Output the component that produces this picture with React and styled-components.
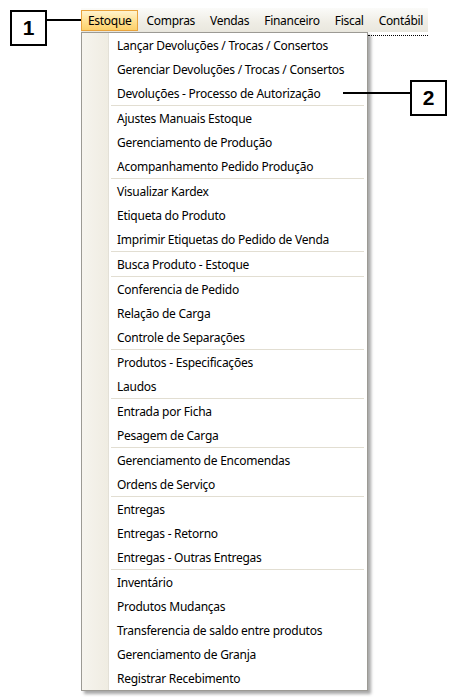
import React from "react";
import styled, { createGlobalStyle } from "styled-components";

const Global = createGlobalStyle`
  html, body { margin: 0; padding: 0; background: #ffffff; }
  body { font-family: "Noto Sans", "Open Sans", sans-serif; }
`;

const Page = styled.div`
  position: relative;
  width: 466px;
  height: 697px;
  padding: 8px 0 0 10px;
  box-sizing: border-box;
  overflow: hidden;
  display: flex;
  align-items: flex-start;
`;

const Annotation = styled.div`
  display: flex;
  align-items: flex-start;
  margin-top: 2px;
`;

const MenuColumn = styled.div`
  display: flex;
  flex-direction: column;
`;

const MenuBar = styled.div`
  display: flex;
  gap: 1px;
  width: 347px;
  height: 24px;
  padding-top: 2px;
  box-sizing: border-box;
  background: linear-gradient(#fbfbf9, #efede5 60%, #e9e7de);
`;

const BarItem = styled.div`
  height: 21px;
  padding: 0 6px;
  display: flex;
  align-items: center;
  font-size: 12px;
  letter-spacing: -0.3px;
  color: #000;
  box-sizing: border-box;
  border: 1px solid ${(p) => (p.active ? "#e8a33c" : "transparent")};
  background: ${(p) =>
    p.active ? "linear-gradient(#fff4cf, #ffe08f 55%, #fcd06a)" : "transparent"};
`;

const Below = styled.div`
  display: flex;
  align-items: flex-start;
`;

const Dropdown = styled.div`
  width: 287px;
  border: 1px solid #9c9a94;
  box-shadow: 3px 3px 3px rgba(0, 0, 0, 0.35);
  box-sizing: border-box;
  display: flex;
  flex-direction: column;
  background: linear-gradient(
      90deg,
      #f6f4ee,
      #efece2 26px,
      #e3e0d7 26px,
      #e3e0d7 27px,
      #ffffff 27px
    );
`;

const Item = styled.div`
  height: 24px;
  display: flex;
  align-items: center;
  padding-left: 35px;
  font-size: 12px;
  letter-spacing: -0.25px;
  color: #000;
  white-space: nowrap;
`;

const Separator = styled.div`
  height: 1px;
  margin: 0 3px 0 29px;
  background: #e2ded2;
`;

const FocusLine = styled.div`
  width: 60px;
  margin-top: 3px;
  border-top: 1px dotted #000;
`;

const Callout = styled.div`
  width: 37px;
  height: 36px;
  border: 2px solid #000;
  background: #fff;
  box-sizing: border-box;
  display: flex;
  align-items: center;
  justify-content: center;
  font-family: "Liberation Sans", Arial, sans-serif;
  font-weight: bold;
  font-size: 21px;
  flex-shrink: 0;
`;

const Leader = styled.div`
  width: ${(p) => p.w}px;
  height: 2px;
  margin-top: ${(p) => p.top || 0}px;
  background: #000;
`;

/* callout 2 sits over the open menu, so it is laid on top */
const Overlay = styled.div`
  position: absolute;
  left: 343px;
  top: 80px;
  display: flex;
  align-items: flex-start;
`;

const barItems = ["Estoque", "Compras", "Vendas", "Financeiro", "Fiscal", "Contábil"];

const groups = [
  [
    "Lançar Devoluções / Trocas / Consertos",
    "Gerenciar Devoluções / Trocas / Consertos",
    "Devoluções - Processo de Autorização",
  ],
  ["Ajustes Manuais Estoque", "Gerenciamento de Produção", "Acompanhamento Pedido Produção"],
  ["Visualizar Kardex", "Etiqueta do Produto", "Imprimir Etiquetas do Pedido de Venda"],
  ["Busca Produto - Estoque"],
  ["Conferencia de Pedido", "Relação de Carga", "Controle de Separações"],
  ["Produtos - Especificações", "Laudos"],
  ["Entrada por Ficha", "Pesagem de Carga"],
  ["Gerenciamento de Encomendas", "Ordens de Serviço"],
  ["Entregas", "Entregas - Retorno", "Entregas - Outras Entregas"],
  [
    "Inventário",
    "Produtos Mudanças",
    "Transferencia de saldo entre produtos",
    "Gerenciamento de Granja",
    "Registrar Recebimento",
  ],
];

export default function App() {
  return (
    <>
      <Global />
      <Page>
        <Annotation>
          <Callout>1</Callout>
          <Leader w={34} top={9} />
        </Annotation>
        <MenuColumn>
          <MenuBar>
            {barItems.map((b, i) => (
              <BarItem key={b} active={i === 0}>
                {b}
              </BarItem>
            ))}
          </MenuBar>
          <Below>
            <Dropdown>
              {groups.map((g, gi) => (
                <React.Fragment key={gi}>
                  {gi > 0 && <Separator />}
                  {g.map((label) => (
                    <Item key={label}>{label}</Item>
                  ))}
                </React.Fragment>
              ))}
            </Dropdown>
            <FocusLine />
          </Below>
        </MenuColumn>

        <Overlay>
          <Leader w={67} top={12} />
          <Callout>2</Callout>
        </Overlay>
      </Page>
    </>
  );
}
